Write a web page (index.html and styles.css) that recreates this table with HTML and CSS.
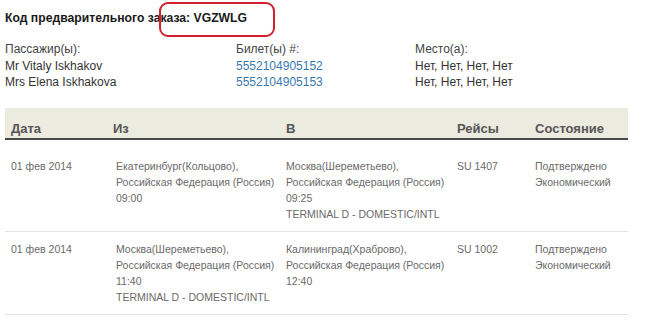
FILE: index.html
```html
<!DOCTYPE html>
<html lang="ru">
<head>
<meta charset="utf-8">
<link rel="stylesheet" href="styles.css">
</head>
<body>
<div class="page">
  <div class="title-wrap">
    <h1 class="title">Код предварительного заказа: VGZWLG</h1>
    <span class="mark"></span>
  </div>
  <div class="pax">
    <div class="col c-name">
      <div class="lbl">Пассажир(ы):</div>
      <div>Mr Vitaly Iskhakov</div>
      <div>Mrs Elena Iskhakova</div>
    </div>
    <div class="col c-tkt">
      <div class="lbl">Билет(ы) #:</div>
      <div class="link">5552104905152</div>
      <div class="link">5552104905153</div>
    </div>
    <div class="col c-seat">
      <div class="lbl">Место(а):</div>
      <div>Нет, Нет, Нет, Нет</div>
      <div>Нет, Нет, Нет, Нет</div>
    </div>
  </div>
  <table class="trip">
    <thead>
      <tr>
        <th class="w1">Дата</th>
        <th class="w2 hiz">Из</th>
        <th class="w3">В</th>
        <th class="w4">Рейсы</th>
        <th class="w5">Состояние</th>
      </tr>
    </thead>
    <tbody>
      <tr class="first">
        <td>01 фев 2014</td>
        <td>Екатеринбург(Кольцово),<br>Российская Федерация (Россия)<br>09:00</td>
        <td>Москва(Шереметьево),<br>Российская Федерация (Россия)<br>09:25<br>TERMINAL D - DOMESTIC/INTL</td>
        <td>SU 1407</td>
        <td>Подтверждено<br>Экономический</td>
      </tr>
      <tr>
        <td>01 фев 2014</td>
        <td>Москва(Шереметьево),<br>Российская Федерация (Россия)<br>11:40<br>TERMINAL D - DOMESTIC/INTL</td>
        <td>Калининград(Храброво),<br>Российская Федерация (Россия)<br>12:40</td>
        <td>SU 1002</td>
        <td>Подтверждено<br>Экономический</td>
      </tr>
    </tbody>
  </table>
</div>
</body>
</html>
```

FILE: styles.css
```css
html, body {
  margin: 0;
  padding: 0;
  background: #ffffff;
}
body {
  font-family: "Liberation Sans", Arial, sans-serif;
  color: #333;
}
.page {
  width: 670px;
  height: 324px;
  overflow: hidden;
}
.title-wrap {
  position: relative;
  padding: 10px 0 0 5px;
  height: 30px;
}
.title {
  margin: 0;
  font-size: 12.2px;
  font-weight: bold;
  line-height: 16px;
  color: #1a1a1a;
}
.mark {
  position: absolute;
  left: 159px;
  top: 2px;
  width: 112px;
  height: 31px;
  border: 2px solid #d0202c;
  border-radius: 9px;
}
.pax {
  display: flex;
  padding: 1px 0 0 5px;
  font-size: 12px;
  line-height: 16.5px;
  color: #333;
}
.c-name { width: 231px; }
.c-tkt { width: 179px; }
.lbl { color: #444; }
.link { color: #3a78b0; }
.trip {
  margin: 17px 0 0 5px;
  width: 623px;
  border-collapse: collapse;
  table-layout: fixed;
}
.trip thead tr {
  background: #ecebe0;
}
.trip th {
  text-align: left;
  font-size: 13px;
  font-weight: bold;
  color: #555;
  height: 31px;
  padding: 12px 0 0 6px;
  box-sizing: border-box;
  border-bottom: 2px solid #4a4a4a;
  line-height: 16px;
  white-space: nowrap;
}
.w1 { width: 105px; }
.w2 { width: 170px; }
.w3 { width: 171px; }
.w4 { width: 78px; }
.w5 { width: 99px; }
.hiz { padding-left: 3px !important; }
.trip td {
  vertical-align: top;
  font-size: 10.5px;
  line-height: 16px;
  color: #6a6a6a;
  padding: 9px 0 9px 6px;
  border-bottom: 1px solid #e3e3e3;
  white-space: nowrap;
}
.trip tr.first td {
  padding-top: 18px;
}
```
